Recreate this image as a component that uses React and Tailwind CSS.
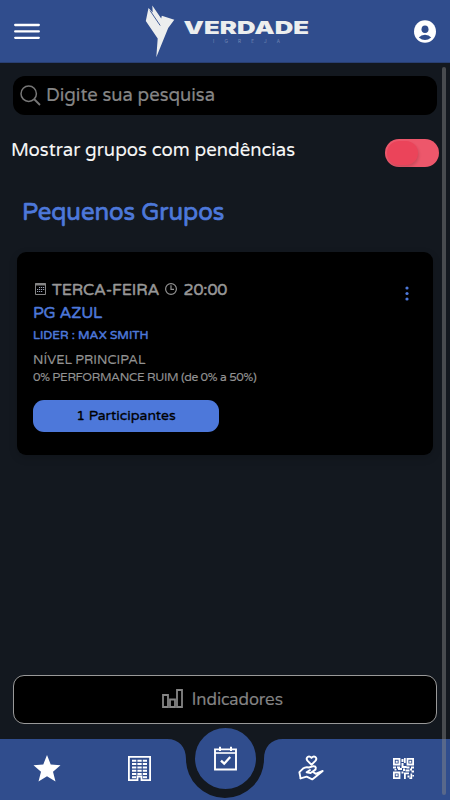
import React from "react";

const font = "font-['Varela_Round','Noto_Sans',sans-serif]";

function Menu() {
  return (
    <button aria-label="Menu" className="block">
      <svg width="26" height="17" viewBox="0 0 26 17" stroke="#fff" strokeWidth="2.3" strokeLinecap="round">
        <path d="M1.2 2H24.8M1.2 8.4H24.8M1.2 14.8H24.8" />
      </svg>
    </button>
  );
}

function Logo() {
  return (
    <svg width="165" height="53" viewBox="145 5 165 53">
      <path d="M148.5 8 L152.7 12.5 L152.3 5.6 L161.2 18.5 L161.8 15.8 L174.3 19.7 L168.2 28 L156.3 57.2 L157.7 38.5 L145.8 21 Z" fill="#eceeee" />
      <path d="M150 10.5 L160.2 25.5" stroke="#304d8d" strokeWidth="0.9" />
      <text x="183.5" y="34" textLength="125.5" lengthAdjust="spacingAndGlyphs" fontFamily="Inter" fontWeight="900" fontSize="17.6" fill="#eceeee">VERDADE</text>
      <text x="213" y="43.3" textLength="67" fontFamily="Inter" fontSize="4.6" fill="#7489b5">IGREJA</text>
    </svg>
  );
}

function User() {
  return (
    <svg width="22" height="23" viewBox="0 0 22 23">
      <ellipse cx="11" cy="11.5" rx="11" ry="11.3" fill="#fff" />
      <ellipse cx="11" cy="9.2" rx="3.5" ry="3.8" fill="#304d8d" />
      <path d="M4.8 17.4Q7 14.8 11 14.8Q15 14.8 17.2 17.4Q11 22.4 4.8 17.4Z" fill="#304d8d" />
    </svg>
  );
}

function Search() {
  return (
    <svg width="21" height="21" viewBox="0 0 21 21" fill="none" stroke="#777" strokeWidth="1.5">
      <circle cx="8.7" cy="8.7" r="7.7" />
      <path d="M14 14 L20 20" strokeWidth="1.8" />
    </svg>
  );
}

function Calendar() {
  return (
    <svg width="11" height="12" viewBox="0 0 11 12">
      <path d="M.5 .5H10.5V11.5H.5Z" fill="none" stroke="#858585" />
      <path d="M0 1.5H11" stroke="#858585" strokeWidth="2" />
      <path d="M4 4.5H10M2 6.5H10M2 8.5H8" stroke="#9aa0b4" strokeWidth="1.2" strokeDasharray="1.2 .8" />
    </svg>
  );
}

function Clock() {
  return (
    <svg width="12" height="12" viewBox="0 0 12 12" fill="none" stroke="#929292" strokeWidth="1.2">
      <circle cx="6" cy="6" r="5.4" />
      <path d="M6 2.3V6.3H9" />
    </svg>
  );
}

function Bars() {
  return (
    <svg width="21" height="19" viewBox="0 0 21 19" fill="none" stroke="#858585" strokeWidth="1.8">
      <path d="M1 6H6V18H1ZM8 10.5H13V18H8ZM15 1H20V18H15Z" />
    </svg>
  );
}

function Star() {
  return (
    <svg width="28" height="27" viewBox="0 0 28 27" fill="#fff">
      <path d="M14 0L17.7 9.4L27.5 10.2L20 16.7L22.5 26.5L14 21.3L5.5 26.5L8 16.7L.5 10.2L10.3 9.4Z" />
    </svg>
  );
}

function Building() {
  return (
    <svg width="23" height="25" viewBox="0 0 23 25">
      <path d="M.9 .9H22.1V24.1H13.5V20.5H9.5V24.1H.9Z" fill="none" stroke="#fff" strokeWidth="1.8" />
      <path d="M4 4.8H19M4 8.1H19M4 11.4H19M4 14.7H19M4 18H19M4 21.2H8M15 21.2H19" stroke="#fff" strokeWidth="2" strokeDasharray="4.3 1.1" />
    </svg>
  );
}

function Giving() {
  return (
    <svg width="26" height="26" viewBox="0 0 26 26" fill="none" stroke="#fff" strokeWidth="1.9" strokeLinejoin="round" strokeLinecap="round">
      <path d="M13.5 9.8L9.4 5.6C7.4 3 10.6 -.2 13.5 2.9C16.4 -.2 19.6 3 17.6 5.6Z" />
      <path d="M2.6 23.4L1.4 17.2L5 13.6C7 12 9.2 12 11 12.5L15.4 11.2C18.4 11 18.6 14 16.4 15.4L12.6 18L8.6 17.2L12 15" />
      <path d="M2.6 23.4L8.7 21.7L14.2 24.4L24.7 16L17.6 18.8L15.4 17.2" />
    </svg>
  );
}

function QrCode() {
  return (
    <svg width="21" height="21" viewBox="0 0 21 21" fill="#fff">
      <path fillRule="evenodd" d="M0 0H7.4V7.4H0ZM1.8 1.8V5.6H5.6V1.8ZM13.6 0H21V7.4H13.6ZM15.4 1.8V5.6H19.2V1.8ZM0 13.6H7.4V21H0ZM1.8 15.4V19.2H5.6V15.4Z" />
      <path d="M2.7 2.7h2v2h-2zM16.3 2.7h2v2h-2zM2.7 16.3h2v2h-2zM8.5 1h2v3h-2zM11 0h1.7v5h-1.7zM8.5 5h2v3h3v2h-5zM0 8.5h3v2h-3zM4 8.5h3v1.5h2v2h-4v-1.5h-1zM1.5 11h2v1.5h-2zM10 10.5h2v2.5h-2zM13.5 8.5h3v2h-3zM18 8.5h3v2h-2v2h-2v-2h1zM12.5 11.5h4v2h-4zM18.5 12.5h2.5v2h-2.5zM8.5 13.5h2v2h-2zM11 14.5h5v1.7h-3.2v4.8h-1.8zM14.5 17.5h2v2h-2zM17.5 15.5h1.7v5.5h-2.8v-1.5h1.1zM19.5 17h1.5v1.5h-1.5z" />
    </svg>
  );
}

function Event() {
  return (
    <svg width="23" height="25" viewBox="0 0 23 25" fill="none" stroke="#fff">
      <path d="M1 3.4H22V23.5H1Z" strokeWidth="1.9" />
      <path d="M1 7H22" strokeWidth="1.6" />
      <path d="M6 .8V5M17 .8V5" strokeWidth="2" />
      <path d="M7 14.6L10.2 17.7L16.2 11" strokeWidth="2.3" />
    </svg>
  );
}

export default function App() {
  return (
    <div className={`relative flex h-[800px] w-[450px] flex-col overflow-hidden bg-[#13181f] ${font}`}>
      <header className="flex h-[63px] shrink-0 items-center justify-between border-b border-[#293f72] bg-[#304d8d] pr-[14px] pl-[14px]">
        <Menu />
        <div className="ml-[105px] flex-1"><Logo /></div>
        <User />
      </header>

      <main className="flex flex-1 flex-col px-[13px] pt-[13px]">
        <label className="flex h-[39px] items-center gap-[5px] rounded-[12px] bg-black pl-[7px]">
          <Search />
          <span className="-mt-0.5 text-[18.4px] leading-6 whitespace-nowrap text-[#858585] [-webkit-text-stroke:0.2px_currentColor]">Digite sua pesquisa</span>
        </label>

        <div className="mt-[24px] -mr-[2px] -ml-[2px] flex h-[28px] justify-between">
          <span className="-mt-px text-[18.5px] leading-6 whitespace-nowrap text-[#f6f6f6] [-webkit-text-stroke:0.1px_currentColor]">Mostrar grupos com pendências</span>
          <button role="switch" aria-checked="false" aria-label="Mostrar grupos com pendências" className="flex h-[28px] w-[54px] items-center rounded-full bg-[#ed576b] pl-[2px]">
            <span className="h-[24px] w-[31px] rounded-full bg-[#eb445a] shadow-[1px_2px_3px_rgba(0,0,0,0.14)]" />
          </button>
        </div>

        <h1 className="mt-[30px] ml-[9px] h-8 text-[24px] leading-8 tracking-[-0.05px] whitespace-nowrap text-[#4d78da] [-webkit-text-stroke:0.7px_currentColor]">Pequenos Grupos</h1>

        <section className="mt-[23px] ml-[4px] flex h-[203px] w-[416px] justify-between rounded-[9px] bg-black pt-[27px] pr-[24px] pl-4 shadow-[0_3px_8px_rgba(0,0,0,0.15)]">
          <div className="flex flex-col whitespace-nowrap">
            <div className="flex h-5 items-center text-[16px] leading-5 tracking-[-0.1px] text-[#979797] [-webkit-text-stroke:0.5px_currentColor]">
              <span className="mr-[6px] ml-[2px]"><Calendar /></span>
              <span className="mt-px">TERCA-FEIRA</span>
              <span className="mr-[6px] ml-[6px]"><Clock /></span>
              <span className="mt-px">20:00</span>
            </div>
            <div className="mt-[4px] h-5 text-[16px] leading-5 tracking-[-0.2px] text-[#4d78da] [-webkit-text-stroke:0.5px_currentColor]"><span>PG AZUL</span></div>
            <div className="mt-[4px] h-4 text-[12px] leading-4 text-[#4d78da] [-webkit-text-stroke:0.5px_currentColor]"><span>LIDER : MAX SMITH</span></div>
            <div className="mt-2 h-[18px] text-[13px] leading-[18px] text-[#929292] [-webkit-text-stroke:0.15px_currentColor]"><span>NÍVEL PRINCIPAL</span></div>
            <div className="h-4 text-[12px] leading-4 tracking-[-0.35px] text-[#929292] [-webkit-text-stroke:0.15px_currentColor]"><span>0% PERFORMANCE RUIM (de 0% a 50%)</span></div>
            <button className="mt-[15px] flex h-[32px] w-[186px] items-center justify-center rounded-[11px] bg-[#4d78da] pb-[2px] text-[14px] text-black [-webkit-text-stroke:0.3px_currentColor]"><span>1 Participantes</span></button>
          </div>
          <svg className="mt-[7px]" width="4" height="16" viewBox="0 0 4 16" fill="#4d78da"><circle cx="2" cy="2" r="1.6" /><circle cx="2" cy="7.5" r="1.6" /><circle cx="2" cy="13" r="1.6" /></svg>
        </section>

        <button className="mt-[220px] flex h-[49px] shrink-0 items-center justify-center gap-[9px] rounded-[11px] border border-[#999] bg-black pr-[5px] pb-[2px] text-[#858585]">
          <Bars />
          <span className="mt-px font-['Nunito','Noto_Sans',sans-serif] text-[18px] leading-6 tracking-[-0.1px] [-webkit-text-stroke:0.2px_currentColor]">Indicadores</span>
        </button>
      </main>

      <nav className="relative grid h-[61px] shrink-0 grid-cols-[93px_93px_78px_93px_93px] items-center justify-items-center">
        <svg className="absolute inset-0" width="450" height="61" viewBox="0 0 450 61">
          <path d="M0 0H167C179 0 186 8 186 20A39 39 0 0 0 264 20C264 8 271 0 283 0H450V61H0Z" fill="#304d8d" />
        </svg>
        <button aria-label="Favoritos" className="relative -mt-[2px]"><Star /></button>
        <button aria-label="Igreja" className="relative -mt-[3px]"><Building /></button>
        <button aria-label="Agenda" className="relative -mt-[23px] flex size-[61px] items-center justify-center rounded-full bg-[#304d8d]"><Event /></button>
        <button aria-label="Doações" className="relative -mt-[4px]"><Giving /></button>
        <button aria-label="QR Code" className="relative -mt-[3px]"><QrCode /></button>
      </nav>

      <div className="absolute top-[67px] left-[442px] h-[728px] w-[4px] rounded-sm bg-[#898989]/45" />
    </div>
  );
}
